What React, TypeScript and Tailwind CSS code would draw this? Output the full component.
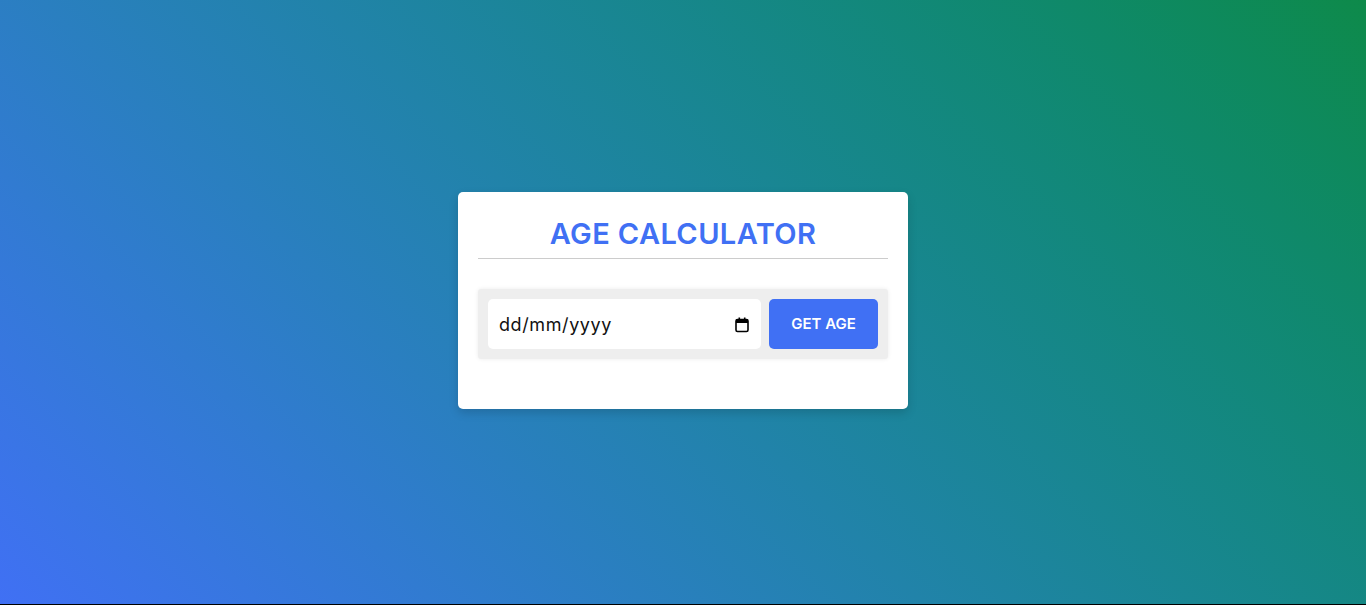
import React from "react";

export default function App() {
  return (
    <div className="w-full h-[605px] bg-black">
      <div
        className="w-full h-[604px] flex items-center justify-center pb-[4px] bg-linear-45 from-[#4070f4] to-[#0e8a4a]"
        style={{ fontFamily: "Inter, 'Open Sans', sans-serif" }}
      >
        <div className="w-[450px] h-[217px] bg-white rounded-[5px] p-5 shadow-[0_4px_10px_rgba(0,0,0,0.15)]">
          <h1 className="text-[29px] leading-[36px] font-semibold text-[#4070f4] text-center pt-[4px] pb-[6px] border-b border-[#cccccc] tracking-[0.4px]">
            AGE CALCULATOR
          </h1>
          <div className="mt-[30px] h-[70px] bg-[#eeeeee] p-[10px] rounded-[3px] flex gap-2 shadow-[0_0_4px_rgba(0,0,0,0.08)]">
            <div className="w-[273px] h-[50px] bg-white rounded-[5px] flex items-center justify-between pl-[11px] pr-[12px] pt-[2px]">
              <span className="text-[18px] font-normal text-[#111] tracking-[0.6px]">dd/mm/yyyy</span>
              <svg width="14" height="16" viewBox="0 0 14 16">
                <rect x="1" y="2.5" width="12" height="12" rx="1.5" fill="none" stroke="#000" strokeWidth="1.6" />
                <rect x="1" y="2.5" width="12" height="3.5" fill="#000" />
                <rect x="3.5" y="0.5" width="1.6" height="3" fill="#000" />
                <rect x="8.9" y="0.5" width="1.6" height="3" fill="#000" />
              </svg>
            </div>
            <button className="w-[109px] h-[50px] bg-[#4070f4] rounded-[5px] text-white text-[15px] font-semibold uppercase pt-[2px]">
              Get Age
            </button>
          </div>
        </div>
      </div>
    </div>
  );
}
